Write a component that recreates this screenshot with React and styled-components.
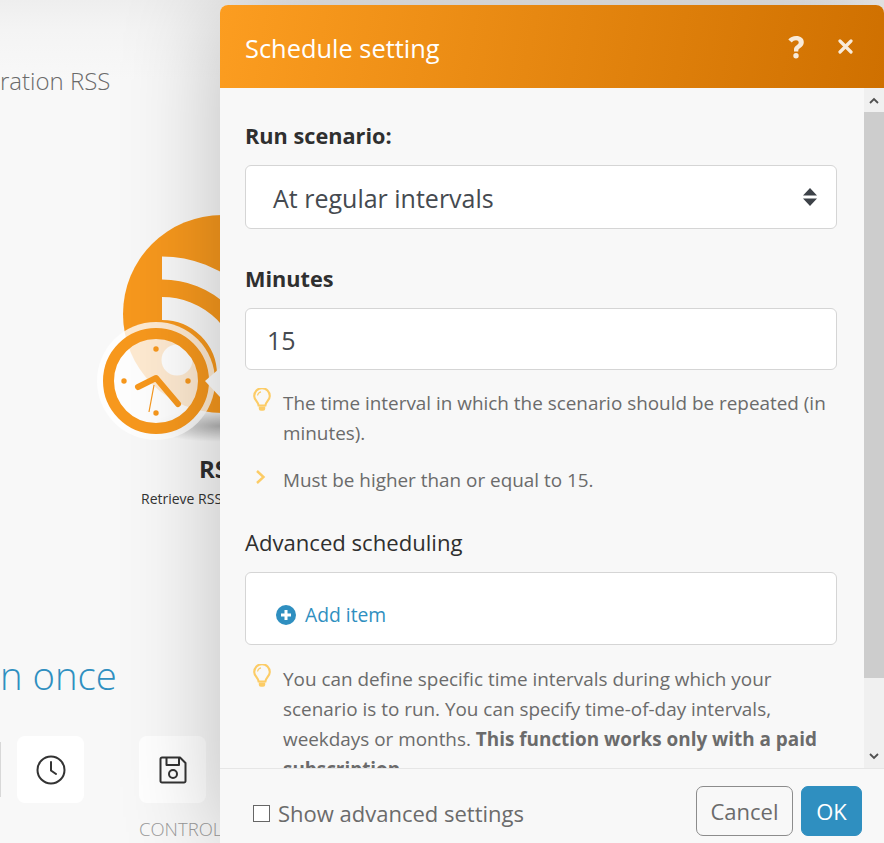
import React from 'react';
import styled, { createGlobalStyle } from 'styled-components';

const Global = createGlobalStyle`
  html, body { margin: 0; padding: 0; height: 100%; overflow: hidden; }
  body { background: #f8f8f8; font-family: "Open Sans", "Noto Sans", sans-serif; }
  * { box-sizing: border-box; }
`;

const Page = styled.div`
  position: relative;
  width: 884px;
  height: 843px;
  overflow: hidden;
  background: linear-gradient(#eeeeee 0, #f4f4f4 30px, #f8f8f8 80px);
`;

const CanvasText = styled.div`
  position: absolute;
  left: ${p => p.$x}px;
  top: ${p => p.$y}px;
  white-space: nowrap;
  font-size: ${p => p.$size}px;
  line-height: 1;
  color: ${p => p.$color};
  font-weight: ${p => p.$weight || 400};
`;

const ModuleArt = styled.svg`
  position: absolute;
  left: 90px;
  top: 200px;
`;

const IconTile = styled.div`
  position: absolute;
  left: ${p => p.$x}px;
  top: 736px;
  width: 67px;
  height: 67px;
  border-radius: 8px;
  background: #fff;
  display: flex;
  align-items: center;
  justify-content: center;
  color: #333;
`;

const Sliver = styled.div`
  position: absolute;
  left: 0;
  top: 742px;
  width: 1px;
  height: 55px;
  background: #d8d8d8;
`;

const Modal = styled.section`
  position: absolute;
  left: 220px;
  top: 5px;
  width: 664px;
  height: 838px;
  display: flex;
  flex-direction: column;
  background: #f8f8f8;
  border-radius: 8px 8px 0 0;
  box-shadow: 0 0 100px rgba(0, 0, 0, 0.24);
`;

const Header = styled.header`
  height: 83px;
  flex: none;
  display: flex;
  align-items: center;
  padding: 0 31px 0 25px;
  border-radius: 8px 8px 0 0;
  background: linear-gradient(100deg, #fc9d20 0%, #cf7000 100%);
  color: #fff;
`;

const Title = styled.h2`
  flex: 1;
  margin: 3px 0 0;
  font-size: 25.4px;
  font-weight: 400;
`;

const HeaderIcons = styled.div`
  display: flex;
  align-items: center;
  gap: 32px;
  opacity: 0.85;
  svg { display: block; }
`;

const BodyRow = styled.div`
  flex: 1;
  min-height: 0;
  display: flex;
`;

const Scroll = styled.div`
  flex: 1;
  min-width: 0;
  overflow: hidden;
  padding: 34px 27px 0 25px;
`;

const Bar = styled.div`
  width: 20px;
  flex: none;
  display: flex;
  flex-direction: column;
  background: #f0f0f0;
`;

const BarButton = styled.div`
  height: 24px;
  flex: none;
  display: flex;
  align-items: center;
  justify-content: center;
  color: #505050;
`;

const Thumb = styled.div`
  height: 566px;
  flex: none;
  background: #cdcdcd;
`;

const BarGap = styled.div`
  flex: 1;
`;

const Label = styled.div`
  font-size: ${p => (p.$bold ? 21.7 : 22.1)}px;
  line-height: 28px;
  font-weight: ${p => (p.$bold ? 700 : 400)};
  color: #2f2f2f;
  margin-bottom: ${p => p.$mb}px;
`;

const Control = styled.div`
  height: ${p => p.$h}px;
  background: #fff;
  border: 1px solid #d5d5d5;
  border-radius: 6px;
  display: flex;
  align-items: center;
  padding-left: ${p => p.$pl}px;
  padding-right: 18px;
  font-size: 25px;
  color: #454a50;
  margin-bottom: ${p => p.$mb}px;
`;

const ControlValue = styled.span`
  flex: 1;
  padding-top: 2px;
`;

const Hint = styled.div`
  display: flex;
  margin-bottom: ${p => p.$mb}px;
  font-size: 18.9px;
  line-height: 30px;
  color: #6b6b6b;
`;

const HintIcon = styled.div`
  width: 38px;
  flex: none;
  padding: ${p => p.$pt}px 0 0 ${p => p.$pl}px;
  color: #fccc66;
  svg { display: block; }
`;

const HintText = styled.div`
  flex: 1;
  b { font-weight: 700; }
`;

const AddItem = styled.div`
  display: flex;
  align-items: center;
  gap: 9px;
  padding-top: 12px;
  font-size: 19.3px;
  color: #2f8fc0;
`;

const Footer = styled.footer`
  height: 75px;
  flex: none;
  display: flex;
  align-items: flex-start;
  justify-content: space-between;
  padding: 17px 22px 0 33px;
  border-top: 1px solid #e6e6e6;
  background: #f8f8f8;
`;

const CheckLabel = styled.label`
  display: flex;
  align-items: center;
  gap: 8px;
  height: 54px;
  font-size: 22px;
  color: #6b6b6b;
`;

const Box = styled.span`
  width: 17px;
  height: 17px;
  border: 1.5px solid #666;
  background: #fff;
`;

const Buttons = styled.div`
  display: flex;
  gap: 8px;
`;

const Button = styled.button`
  height: 50px;
  padding: 0;
  width: ${p => (p.$primary ? 61 : 97)}px;
  border-radius: 7px;
  font-family: inherit;
  font-size: 22px;
  border: 1px solid ${p => (p.$primary ? '#2f8fc0' : '#8c8c8c')};
  background: ${p => (p.$primary ? '#2f8fc0' : 'transparent')};
  color: ${p => (p.$primary ? '#fff' : '#6b6b6b')};
`;

const Bulb = () => (
  <svg width="18" height="24" viewBox="0 0 18 24" fill="none" stroke="currentColor">
    <path d="M5.6 17.5C5 13.5 1.2 12 1.2 8a7.800 7.800 0 0 1 15.600 0c0 4-3.800 5.500-4.400 9.500z" strokeWidth="2.100" />
    <path d="M4.500 7.500A4.500 4.500 0 0 1 8 3.800" strokeWidth="1.200" />
    <path d="M5.800 18.500h6.400v2.300a2 2 0 0 1-2 2H7.800a2 2 0 0 1-2-2z" fill="currentColor" stroke="none" />
  </svg>
);

const Chevron = () => (
  <svg width="11" height="16" viewBox="0 0 11 16" fill="none" stroke="currentColor" strokeWidth="2.400">
    <path d="M2 2l6.500 6L2 14" />
  </svg>
);

export default function App() {
  return (
    <Page>
      <Global />
      <CanvasText $x={0} $y={69} $size={24} $color="#6a6a6a" $weight={300}>ration RSS</CanvasText>
      <ModuleArt width="140" height="320" viewBox="0 0 140 320">
        <defs>
          <radialGradient id="sh" cx="50%" cy="50%" r="50%">
            <stop offset="0" stopColor="#000" stopOpacity="0.28" />
            <stop offset="1" stopColor="#000" stopOpacity="0" />
          </radialGradient>
          <clipPath id="clipRss"><circle cx="132" cy="114" r="99" /></clipPath>
        </defs>
        <ellipse cx="130" cy="226" rx="70" ry="16" fill="url(#sh)" />
        <circle cx="132" cy="114" r="99" fill="#f7981d" />
        <g clipPath="url(#clipRss)" fill="none" stroke="#f8f8f8" strokeWidth="23">
          <path d="M72 68a107 107 0 0 1 107 107" />
          <path d="M72 108.500a66.500 66.500 0 0 1 66.500 66.500" />
        </g>
        <circle cx="87" cy="160" r="15.500" fill="#f8f8f8" />
        <circle cx="66" cy="181" r="59" fill="#fff" fillOpacity="0.8" />
        <circle cx="66" cy="181" r="47.500" fill="none" stroke="#f7981d" strokeWidth="11" />
        <g fill="#f7981d">
          <circle cx="66" cy="149" r="2.700" />
          <circle cx="66" cy="213" r="2.700" />
          <circle cx="34" cy="181" r="2.700" />
          <circle cx="98" cy="181" r="2.700" />
        </g>
        <path d="M48 187l18-9 22 26" fill="none" stroke="#f7981d" strokeWidth="6" strokeLinecap="round" strokeLinejoin="round" />
        <path d="M64 185l-5 27" stroke="#f7981d" strokeWidth="1.200" />
        <path d="M130 168l-15 13 15 16z" fill="#fff" />
      </ModuleArt>
      <CanvasText $x={199} $y={457} $size={24} $color="#2f2f2f" $weight={700}>RSS</CanvasText>
      <CanvasText $x={141} $y={492} $size={14} $color="#333">Retrieve RSS</CanvasText>
      <CanvasText $x={0} $y={656} $size={38.300} $color="#2f8fc0" $weight={300}>n once</CanvasText>
      <Sliver />
      <IconTile $x={17}>
        <svg width="30" height="30" viewBox="0 0 30 30" fill="none" stroke="currentColor" strokeWidth="2" strokeLinecap="round">
          <circle cx="15" cy="15" r="13.500" />
          <path d="M15 7v8.500l5 3.500" />
        </svg>
      </IconTile>
      <IconTile $x={139}>
        <svg width="28" height="28" viewBox="0 0 28 28" fill="none" stroke="currentColor" strokeWidth="2" strokeLinejoin="round">
          <path d="M3 1.500h18l5.500 5.500v18a1.500 1.500 0 0 1-1.500 1.500H3A1.500 1.500 0 0 1 1.500 25V3A1.500 1.500 0 0 1 3 1.500z" />
          <path d="M7.500 2v7h12.500V2" />
          <circle cx="14" cy="18" r="4" />
        </svg>
      </IconTile>
      <CanvasText $x={139} $y={820} $size={18.5} $color="#9a9a9a" $weight={300}>CONTROLS</CanvasText>

      <Modal>
        <Header>
          <Title>Schedule setting</Title>
          <HeaderIcons>
            <svg width="20" height="26" viewBox="0 0 20 26" fill="#fff">
              <path d="M8 17.500v-2.300c0-2 1.300-3 2.700-4 1.200-.8 2-1.500 2-2.700 0-1.400-1.200-2.200-2.700-2.200-1.700 0-3 .8-4.200 2.200L2.300 5.600C4.200 3.300 6.800 2 10.300 2c4.300 0 7.500 2.300 7.500 6.200 0 2.800-1.500 4.200-3.300 5.500-1.300 1-2.200 1.500-2.200 3v.8zM10 24.500a2.700 2.700 0 1 1 0-5.400 2.700 2.700 0 0 1 0 5.400z" />
            </svg>
            <svg width="15" height="15" viewBox="0 0 15 15" fill="none" stroke="#fff" strokeWidth="3.200" strokeLinecap="round">
              <path d="M2 2l11 11M13 2L2 13" />
            </svg>
          </HeaderIcons>
        </Header>
        <BodyRow>
          <Scroll>
            <Label $bold $mb={15}>Run scenario:</Label>
            <Control $h={64} $pl={27} $mb={36}>
              <ControlValue>At regular intervals</ControlValue>
              <svg width="16" height="18" viewBox="0 0 16 18" fill="#3d4248">
                <path d="M8 0l7 7.500H1zM8 18L1 10.500h14z" />
              </svg>
            </Control>
            <Label $bold $mb={15}>Minutes</Label>
            <Control $h={62} $pl={21} $mb={18}>
              <ControlValue>15</ControlValue>
            </Control>
            <Hint $mb={17}>
              <HintIcon $pt={0} $pl={8}><Bulb /></HintIcon>
              <HintText>The time interval in which the scenario should be repeated (in minutes).</HintText>
            </Hint>
            <Hint $mb={33}>
              <HintIcon $pt={4} $pl={10}><Chevron /></HintIcon>
              <HintText>Must be higher than or equal to 15.</HintText>
            </Hint>
            <Label $mb={16}>Advanced scheduling</Label>
            <Control $h={73} $pl={30} $mb={19}>
              <AddItem>
                <svg width="20" height="20" viewBox="0 0 20 20">
                  <circle cx="10" cy="10" r="10" fill="#2f8fc0" />
                  <path d="M10 5v10M5 10h10" stroke="#fff" strokeWidth="3" />
                </svg>
                Add item
              </AddItem>
            </Control>
            <Hint $mb={0}>
              <HintIcon $pt={0} $pl={8}><Bulb /></HintIcon>
              <HintText>You can define specific time intervals during which your scenario is to run. You can specify time-of-day intervals, weekdays or months. <b>This function works only with a paid subscription.</b></HintText>
            </Hint>
          </Scroll>
          <Bar>
            <BarButton>
              <svg width="10" height="7" viewBox="0 0 10 7" fill="none" stroke="currentColor" strokeWidth="1.800"><path d="M1 6l4-4 4 4" /></svg>
            </BarButton>
            <Thumb />
            <BarGap />
            <BarButton>
              <svg width="10" height="7" viewBox="0 0 10 7" fill="none" stroke="currentColor" strokeWidth="1.800"><path d="M1 1l4 4 4-4" /></svg>
            </BarButton>
          </Bar>
        </BodyRow>
        <Footer>
          <CheckLabel><Box />Show advanced settings</CheckLabel>
          <Buttons>
            <Button>Cancel</Button>
            <Button $primary>OK</Button>
          </Buttons>
        </Footer>
      </Modal>
    </Page>
  );
}
